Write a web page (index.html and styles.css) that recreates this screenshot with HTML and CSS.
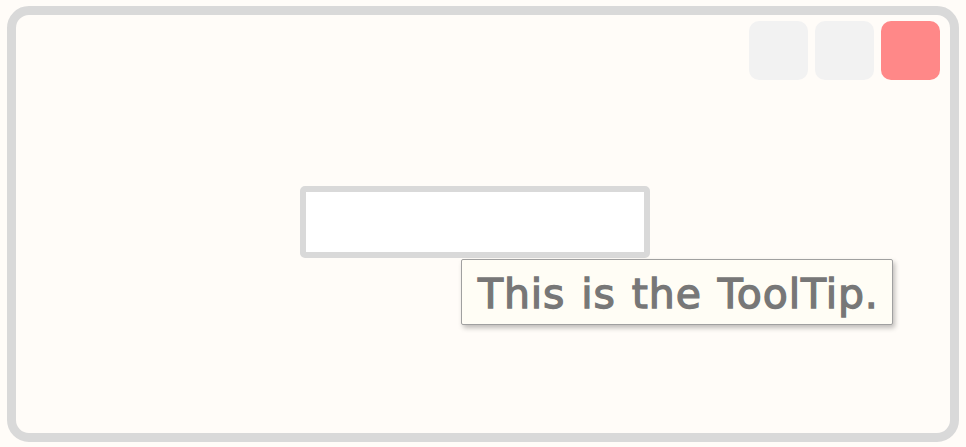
FILE: index.html
```html
<!DOCTYPE html>
<html>
<head>
<meta charset="utf-8">
<link rel="stylesheet" href="styles.css">
</head>
<body>
<div class="window">
  <div class="titlebar">
    <div class="btn"></div>
    <div class="btn"></div>
    <div class="btn btn-close"></div>
  </div>
  <div class="content">
    <div class="field-wrap">
      <div class="field"></div>
      <div class="tooltip">This is the ToolTip.</div>
    </div>
  </div>
</div>
</body>
</html>
```

FILE: styles.css
```css
html, body {
  margin: 0;
  padding: 0;
  background: #fffcf8;
}
body {
  padding: 6px 7px;
  font-family: "DejaVu Sans", sans-serif;
}
.window {
  box-sizing: border-box;
  width: 952px;
  height: 436px;
  border: 9px solid #d9d9d9;
  border-radius: 22px;
  background: #fffcf8;
  display: flex;
  flex-direction: column;
}
.titlebar {
  display: flex;
  justify-content: flex-end;
  gap: 7px;
  padding: 6px 10px 0 0;
}
.btn {
  width: 59px;
  height: 59px;
  border-radius: 10px;
  background: #f2f2f2;
}
.btn-close {
  background: #ff8888;
}
.content {
  padding: 106px 0 0 284px;
}
.field-wrap {
  position: relative;
  width: 350px;
}
.field {
  box-sizing: border-box;
  width: 350px;
  height: 72px;
  border: 6px solid #d9d9d9;
  border-radius: 5px;
  background: #ffffff;
}
.tooltip {
  position: absolute;
  left: 161px;
  top: 73px;
  box-sizing: border-box;
  width: 432px;
  height: 66px;
  border: 1px solid #a0a0a0;
  border-radius: 2px;
  background: #fffdf5;
  box-shadow: 2px 3px 5px rgba(0,0,0,0.25);
  color: #777777;
  -webkit-text-stroke: 1.3px #777777;
  font-size: 41px;
  font-weight: normal;
  letter-spacing: 0.9px;
  word-spacing: 2px;
  padding: 4px 0 0 16px;
  line-height: 60px;
  white-space: nowrap;
}
```
